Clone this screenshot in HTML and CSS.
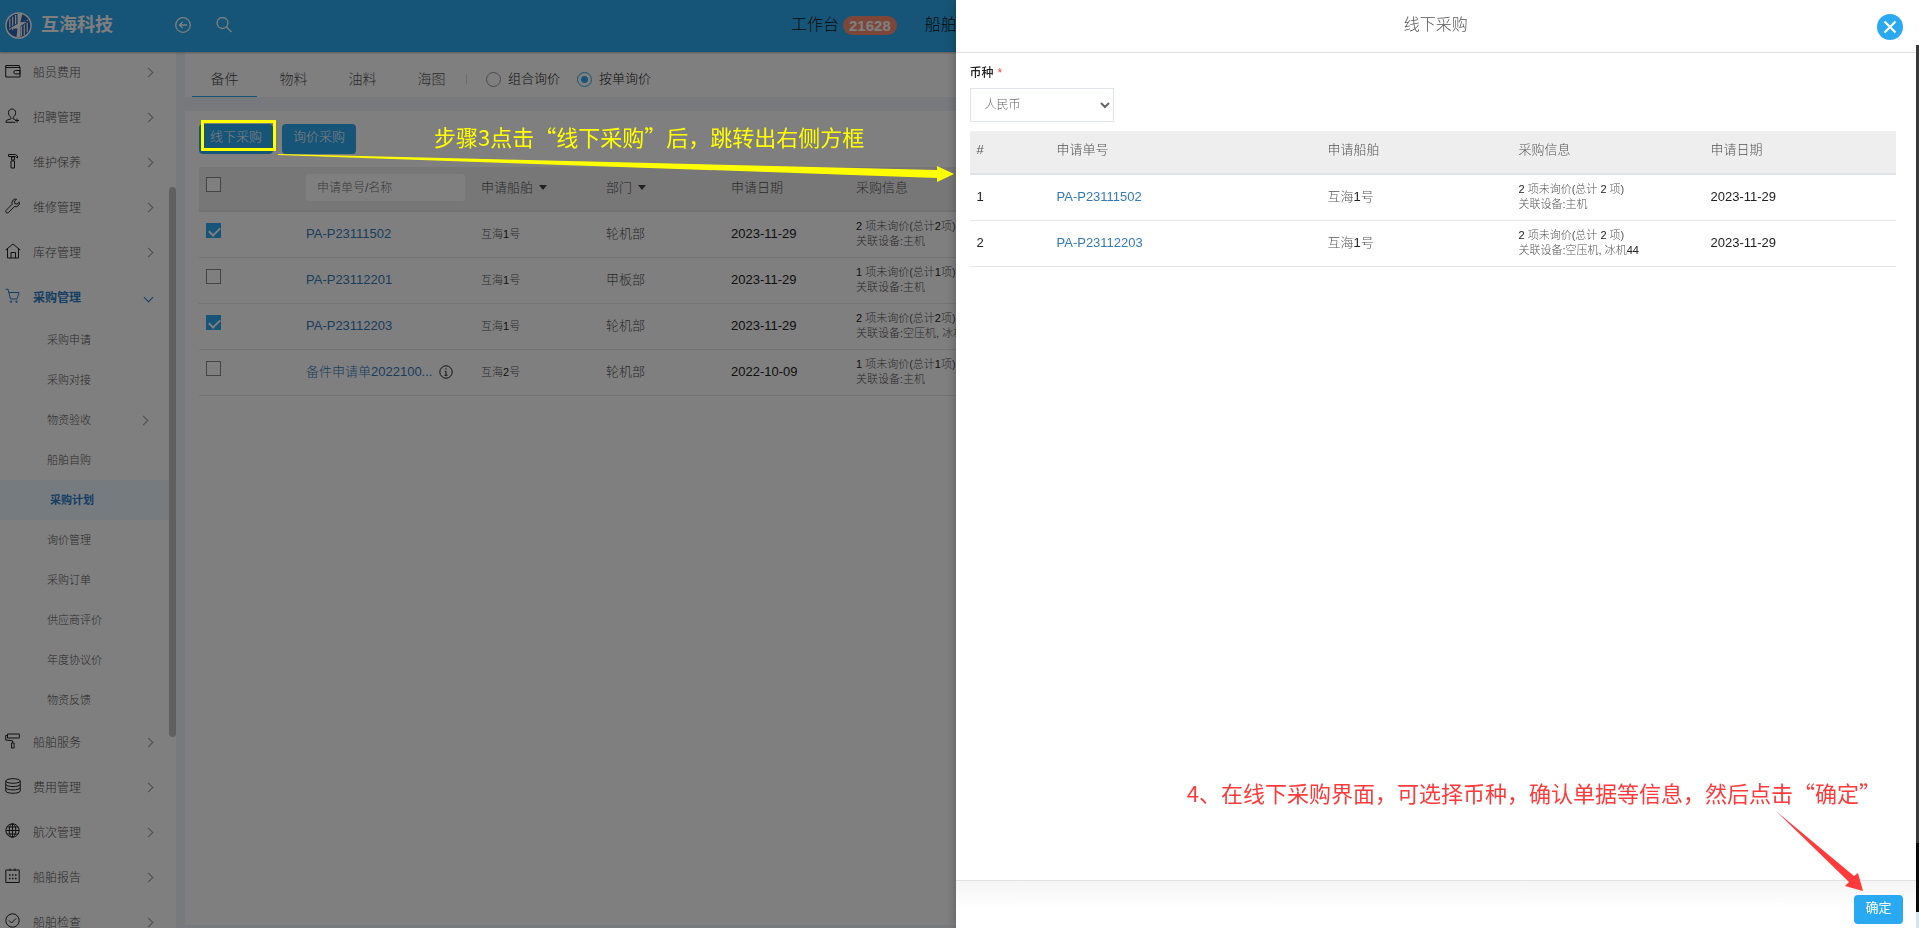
FILE: index.html
```html
<!DOCTYPE html>
<html lang="zh-CN">
<head>
<meta charset="utf-8">
<title>采购计划</title>
<link rel="stylesheet" href="styles.css">
</head>
<body>
<div class="app">
  <header class="topbar">
    <a class="brand" href="#">
      <svg class="brand-logo" viewBox="0 0 28 28" aria-hidden="true">
        <circle cx="14" cy="14" r="13" fill="#2d66b5" stroke="#fff" stroke-width="1.5"/>
        <path d="M5 7v12M8 5v14M11 3v14M17 11v14M20 9v15M23 8v13" stroke="#fff" stroke-width="1.2"/>
        <path d="M13 2h5l-2 8h8l-8 5 0 11h-4l1-9H4l9-5z" fill="#fff"/>
        <path d="M16 10h8l-8 5M4 17l9-5" fill="none" stroke="#2d66b5"/>
      </svg>
      <span class="brand-name">互海科技</span>
    </a>
    <button class="icon-btn" aria-label="返回">
      <svg viewBox="0 0 16 16" class="ico"><circle cx="8" cy="8" r="7.3"/><path d="M12 8H4.500M7.500 5L4.500 8l3 3"/></svg>
    </button>
    <button class="icon-btn" aria-label="搜索">
      <svg viewBox="0 0 16 16" class="ico"><circle cx="6.500" cy="6" r="5.500"/><path d="M10.500 10l5 5"/></svg>
    </button>
    <nav class="topnav">
      <a href="#">工作台<span class="badge">21628</span></a>
      <a href="#">船舶管理</a>
    </nav>
  </header>

  <div class="layout">
    <aside class="sidebar">
      <ul class="menu">
        <li><a class="item" href="#"><svg class="mi" viewBox="0 0 16 16"><path d="M15 4.500V14H.700V2.500h13.600v2"/><path d="M.700 4.500H15.300M15 7.500H10.500a1.700 1.700 0 000 3.400H15z"/></svg><span>船员费用</span><i class="chev"></i></a></li>
        <li><a class="item" href="#"><svg class="mi" viewBox="0 0 16 16"><path d="M6 9.500C4.300 8.300 3.500 6.500 3.500 4.500 3.500 2.300 5 1 7 1s3.600 1.300 3.600 3.500c0 2-.8 3.800-2.600 5v1.300l2.500.8M6 9.500v1.300l-4.500 1.500-.7 2h9.500M12 10.500v4M10 12.500h4"/></svg><span>招聘管理</span><i class="chev"></i></a></li>
        <li><a class="item" href="#"><svg class="mi" viewBox="0 0 16 16"><path d="M3.500 1.500h7l2 1.500v2l-2-1.500H3.500zM6.500 4h3v3h-3zM6 8h3.500v7H6z"/></svg><span>维护保养</span><i class="chev"></i></a></li>
        <li><a class="item" href="#"><svg class="mi" viewBox="0 0 16 16"><path d="M11.500 1.200a3.700 3.700 0 00-4.300 5L.9 12.600c-.8 1.600 1 3 2.300 2.200l6.200-6.300a3.700 3.700 0 004.900-4.400L12 6.200 9.800 5.500 9.500 3.300z"/></svg><span>维修管理</span><i class="chev"></i></a></li>
        <li><a class="item" href="#"><svg class="mi" viewBox="0 0 16 16"><path d="M.7 7L8 1l7.300 6M2.500 6v9h11V6M6 15V9.500h4.500V15"/></svg><span>库存管理</span><i class="chev"></i></a></li>
        <li><a class="item open" href="#"><svg class="mi" viewBox="0 0 16 16"><path d="M.5 1.200H3L5.500 11H12L14 4.500H3.800"/><circle cx="6" cy="13.700" r=".8"/><circle cx="11.500" cy="13.700" r=".8"/></svg><span>采购管理</span><i class="chev down"></i></a>
          <ul class="submenu">
            <li><a href="#">采购申请</a></li>
            <li><a href="#">采购对接</a></li>
            <li><a href="#">物资验收<i class="chev"></i></a></li>
            <li><a href="#">船舶自购</a></li>
            <li><a href="#" class="active">采购计划</a></li>
            <li><a href="#">询价管理</a></li>
            <li><a href="#">采购订单</a></li>
            <li><a href="#">供应商评价</a></li>
            <li><a href="#">年度协议价</a></li>
            <li><a href="#">物资反馈</a></li>
          </ul>
        </li>
        <li><a class="item" href="#"><svg class="mi" viewBox="0 0 16 16"><path d="M2.500 1h11.800v4H2.500zM2.500 2.500H.7V7l7 .8V10M6.500 10h2.600v5H6.500z"/></svg><span>船舶服务</span><i class="chev"></i></a></li>
        <li><a class="item" href="#"><svg class="mi" viewBox="0 0 16 16"><ellipse cx="8" cy="3" rx="7.200" ry="2.300"/><path d="M.8 3v10c0 3 14.400 3 14.400 0V3M.8 6.300c0 3 14.400 3 14.400 0M.8 9.600c0 3 14.400 3 14.400 0"/></svg><span>费用管理</span><i class="chev"></i></a></li>
        <li><a class="item" href="#"><svg class="mi" viewBox="0 0 16 16"><circle cx="7.500" cy="7.500" r="6.700"/><ellipse cx="7.500" cy="7.500" rx="3.300" ry="6.700"/><path d="M7.500 1v13M1 7.500h13M2 4h11M2 11h11"/></svg><span>航次管理</span><i class="chev"></i></a></li>
        <li><a class="item" href="#"><svg class="mi" viewBox="0 0 16 16"><path d="M.8 2h13.400v12.500H.8zM5 .5V3M10 .5V3"/><path d="M4 7h1.500M7 7h1.500M10 7h1.500M4 10.500h1.500M7 10.500h1.500M10 10.500h1.500" stroke-width="1.500"/></svg><span>船舶报告</span><i class="chev"></i></a></li>
        <li><a class="item" href="#"><svg class="mi" viewBox="0 0 16 16"><circle cx="7.500" cy="7.500" r="6.700"/><path d="M4 7.500l2.500 2.500L11 5.500"/></svg><span>船舶检查</span><i class="chev"></i></a></li>
      </ul>
      <div class="scroll-thumb"></div>
    </aside>

    <main class="content">
      <div class="tabs">
        <a class="tab on" href="#">备件</a>
        <a class="tab" href="#">物料</a>
        <a class="tab" href="#">油料</a>
        <a class="tab" href="#">海图</a>
        <span class="sep"></span>
        <label class="radio"><input type="radio" name="mode">组合询价</label>
        <label class="radio"><input type="radio" name="mode" checked>按单询价</label>
      </div>
      <section class="panel">
        <div class="actions">
          <button class="btn">线下采购</button>
          <button class="btn">询价采购</button>
          <div class="mark-box"></div>
        </div>
        <table class="grid plan">
          <colgroup><col class="w-check"><col class="w-no"><col class="w-mid"><col class="w-mid"><col class="w-mid"><col></colgroup>
          <thead>
            <tr><th><input type="checkbox" aria-label="全选"></th><th class="find"><input type="text" placeholder="申请单号/名称" aria-label="申请单号/名称"></th><th>申请船舶<i class="caret"></i></th><th>部门<i class="caret"></i></th><th>申请日期</th><th>采购信息</th></tr>
          </thead>
          <tbody>
            <tr><td><input type="checkbox" aria-label="PA-P23111502" checked></td><td><a href="#">PA-P23111502</a></td><td class="sm">互海<b>1</b>号</td><td>轮机部</td><td class="num">2023-11-29</td><td class="info"><b>2</b> 项未询价(总计<b>2</b>项)<br>关联设备:主机</td></tr>
            <tr><td><input type="checkbox" aria-label="PA-P23112201"></td><td><a href="#">PA-P23112201</a></td><td class="sm">互海<b>1</b>号</td><td>甲板部</td><td class="num">2023-11-29</td><td class="info"><b>1</b> 项未询价(总计<b>1</b>项)<br>关联设备:主机</td></tr>
            <tr><td><input type="checkbox" aria-label="PA-P23112203" checked></td><td><a href="#">PA-P23112203</a></td><td class="sm">互海<b>1</b>号</td><td>轮机部</td><td class="num">2023-11-29</td><td class="info"><b>2</b> 项未询价(总计<b>2</b>项)<br>关联设备:空压机, 冰机<b>44</b></td></tr>
            <tr><td><input type="checkbox" aria-label="备件申请单"></td><td><div class="named"><a href="#">备件申请单2022100...</a><svg viewBox="0 0 14 14" class="tip"><circle cx="7" cy="7" r="6.200"/><path d="M7 3.200v1.300M5.800 6.300H7v4M5.500 10.300h3"/></svg></div></td><td class="sm">互海<b>2</b>号</td><td>轮机部</td><td class="num">2022-10-09</td><td class="info"><b>1</b> 项未询价(总计<b>1</b>项)<br>关联设备:主机</td></tr>
          </tbody>
        </table>
      </section>
    </main>
  </div>
</div>

<div class="mask"></div>

<aside class="drawer">
  <header class="drawer-head">
    <h2>线下采购</h2>
    <button class="close" aria-label="关闭"><svg viewBox="0 0 26 26"><path d="M7.500 7.500l11 11M18.500 7.500l-11 11" stroke="#fff" stroke-width="2.200"/></svg></button>
  </header>
  <div class="drawer-body">
    <label class="field" for="currency">币种<span class="req">*</span></label>
    <select id="currency"><option>人民币</option></select>
    <table class="grid order">
      <colgroup><col class="c1"><col class="c2"><col class="c3"><col class="c4"><col></colgroup>
      <thead><tr><th>#</th><th>申请单号</th><th>申请船舶</th><th>采购信息</th><th>申请日期</th></tr></thead>
      <tbody>
        <tr><td class="num">1</td><td><a href="#">PA-P23111502</a></td><td>互海<b>1</b>号</td><td class="info"><b>2</b> 项未询价(总计 <b>2</b> 项)<br>关联设备:主机</td><td class="num">2023-11-29</td></tr>
        <tr><td class="num">2</td><td><a href="#">PA-P23112203</a></td><td>互海<b>1</b>号</td><td class="info"><b>2</b> 项未询价(总计 <b>2</b> 项)<br>关联设备:空压机, 冰机<b>44</b></td><td class="num">2023-11-29</td></tr>
      </tbody>
    </table>
  </div>
  <footer class="drawer-foot"><button class="btn ok">确定</button></footer>
  <p class="note red">4、在线下采购界面，可选择币种，确认单据等信息，然后点击“确定”</p>
  <svg class="arrow-red" viewBox="0 0 90 82" aria-hidden="true"><path d="M1 1L79 66 83 63 88 81 70 76 74 72z" fill="#ff3a3a"/></svg>
</aside>
<div class="edge"></div>

<p class="note yellow">步骤3点击“线下采购”后，跳转出右侧方框</p>
<svg class="arrow-yellow" viewBox="0 0 678 30" aria-hidden="true"><path d="M0 1L659 17V13L676 21 659 29V25L0 2z" fill="#ff0"/></svg>
</body>
</html>
```
FILE: styles.css
```css
* { box-sizing: border-box; }
body {
  margin: 0;
  height: 100vh;
  overflow: hidden;
  background: #eef3f9;
  color: #555;
  font: 300 13px/18px "Liberation Sans", "Noto Sans CJK SC", sans-serif;
}
a { color: inherit; text-decoration: none; }
ul { list-style: none; margin: 0; padding: 0; }
button { border: 0; background: none; padding: 0; font: inherit; cursor: pointer; }
b { font-weight: 400; color: #222; }

.app { height: 100vh; display: flex; flex-direction: column; }

.topbar {
  position: relative;
  z-index: 2;
  flex: none;
  height: 52px;
  display: flex;
  align-items: center;
  padding: 0 5px 2px;
  background: #2caaf0;
  box-shadow: 0 1px 2px rgba(0, 0, 0, .3);
}
.brand { display: flex; align-items: center; gap: 9px; color: #fff; }
.brand-logo { width: 27px; height: 27px; }
.brand-name { font-size: 18px; font-weight: 700; width: 134px; }
.icon-btn { width: 16px; height: 16px; margin-right: 25px; }
.ico { display: block; width: 16px; height: 16px; fill: none; stroke: #fff; stroke-width: 1.3; }
.topnav { display: flex; margin-left: 534px; gap: 28px; font-size: 16px; color: #111; white-space: nowrap; }
.topnav a { display: flex; align-items: center; gap: 4px; }
.badge {
  padding: 0 6px;
  border-radius: 10px;
  background: #f98e72;
  color: #fff;
  font-size: 15px;
  font-weight: 700;
  line-height: 19px;
}

.layout { flex: 1; min-height: 0; display: flex; gap: 9px; }
.sidebar { position: relative; flex: none; width: 176px; background: #fff; overflow: hidden; }
.menu { margin-top: -2px; }
.item { height: 45px; display: flex; align-items: center; padding: 0 24px 0 5px; gap: 12px; font-size: 12px; }
.mi { width: 16px; height: 16px; fill: none; stroke: #222; stroke-width: 1; margin-top: -3px; }
.item span { flex: 1; }
.chev { width: 7px; height: 7px; border: solid #999; border-width: 1px 1px 0 0; transform: rotate(45deg); }
.chev.down { transform: rotate(135deg); border-color: #2a7cc7; }
.item.open { color: #2a7cc7; font-weight: 700; }
.item.open .mi { stroke: #2a7cc7; }
.submenu a { height: 40px; display: flex; align-items: center; justify-content: space-between; padding: 0 29px 0 47px; font-size: 11px; }
.submenu .active { background: #ebf6ff; color: #2a7cc7; font-weight: 700; padding-left: 50px; margin-right: 7px; }
.scroll-thumb { position: absolute; right: 0; top: 135px; width: 7px; height: 550px; border-radius: 4px; background: #c1c1c1; }

.content { flex: 1; min-width: 0; display: flex; flex-direction: column; gap: 14px; padding-bottom: 3px; }
.tabs { flex: none; height: 45px; display: flex; align-items: stretch; gap: 4px; padding-left: 7px; background: #fff; }
.tab { width: 65px; line-height: 54px; text-align: center; font-size: 14px; }
.tab.on { border-bottom: 1px solid #2caaf0; color: #444; }
.sep { width: 1px; height: 10px; margin: 22px 15px 0 -2px; background: #ddd; }
.radio { display: flex; align-items: center; gap: 7px; padding-top: 9px; margin-right: 13px; color: #222; }
.radio input { appearance: none; width: 15px; height: 15px; margin: 0; border: 1px solid #999; border-radius: 50%; background: #fff; }
.radio input:checked { border-color: #2caaf0; background: radial-gradient(#2caaf0 3px, #fff 4px); }

.panel { flex: 1; padding: 13px 14px; background: #fff; }
.actions { position: relative; display: flex; gap: 9px; margin-bottom: 13px; }
.btn { height: 30px; width: 74px; border-radius: 4px; background: #2caaf0; color: #fff; padding-bottom: 4px; }
.mark-box { position: absolute; left: 2px; top: -4px; width: 75px; height: 31px; border: 3px solid #ff0; z-index: 20; }

.grid { width: 100%; table-layout: fixed; border-collapse: separate; border-spacing: 0; text-align: left; }
.grid th { height: 45px; font-weight: 300; background: #eee; border-bottom: 2px solid #e0e4e8; }
.grid td { height: 46px; border-bottom: 1px solid #e4e6e8; }
.grid th, .grid td { padding: 0 7px 2px; }
.grid a { color: #337ab7; }
.grid .num { color: #222; font-weight: 400; }
.grid .info { font-size: 11px; line-height: 15px; white-space: nowrap; }
.plan .sm { font-size: 11px; }
.w-check { width: 100px; }
.w-no { width: 175px; }
.w-mid { width: 125px; }
.grid input[type=checkbox] {
  appearance: none;
  display: block;
  width: 15px;
  height: 15px;
  margin: 0 0 6px;
  border: 1px solid #888;
  background: #fff;
}
.grid input[type=checkbox]:checked { border: 0; background: #2caaf0; position: relative; }
.grid input[type=checkbox]:checked::after {
  content: "";
  position: absolute;
  left: 5px;
  top: 2px;
  width: 5px;
  height: 9px;
  border: solid #fff;
  border-width: 0 2px 2px 0;
  transform: rotate(45deg);
}
.find input { display: block; width: 159px; height: 27px; border: 0; border-radius: 3px; padding: 0 11px; font: 300 12px "Liberation Sans", "Noto Sans CJK SC", sans-serif; }
.find input::placeholder { color: #777; }
.caret { display: inline-block; margin-left: 6px; border: 4px solid transparent; border-top: 5px solid #444; border-bottom: 0; vertical-align: 2px; }
.named { display: flex; align-items: center; gap: 7px; white-space: nowrap; }
.tip { flex: none; width: 14px; height: 14px; fill: none; stroke: #222; }

.mask { position: fixed; inset: 0; z-index: 5; background: rgba(0, 0, 0, .5); }

.drawer {
  position: fixed;
  top: 0;
  right: 3px;
  bottom: 0;
  z-index: 10;
  width: calc(50% + 1px);
  display: flex;
  flex-direction: column;
  background: #fff;
  box-shadow: 0 0 10px rgba(0, 0, 0, .3);
}
.drawer-head { flex: none; height: 53px; display: flex; align-items: center; justify-content: center; border-bottom: 1px solid #e2e2e2; }
.drawer-head h2 { margin: 0 0 2px; font-size: 16px; font-weight: 300; line-height: 24px; }
.close { position: absolute; right: 13px; top: 14px; width: 26px; height: 26px; border-radius: 50%; background: #2aa9f3; }
.close svg { display: block; }
.drawer-body { flex: 1; padding: 11px 20px 0 14px; }
.field { display: block; color: #222; font-size: 12px; font-weight: 500; margin-bottom: 6px; }
.req { color: #e7503a; margin-left: 4px; }
#currency { display: block; width: 144px; height: 34px; margin-bottom: 9px; padding-left: 10px; border: 1px solid #dfe4e8; border-radius: 0; background: #fff; color: #666; font: 300 12px "Liberation Sans", "Noto Sans CJK SC", sans-serif; }
.order th { height: 44px; padding-bottom: 4px; }
.c1 { width: 80px; }
.c2 { width: 271px; }
.c3 { width: 191px; }
.c4 { width: 192px; }
.drawer-foot {
  flex: none;
  height: 48px;
  display: flex;
  justify-content: flex-end;
  align-items: flex-end;
  padding: 0 13px 4px;
  border-top: 1px solid #e2e2e2;
  background: linear-gradient(#f5f5f5, #fff 60%);
}
.ok { width: 49px; height: 29px; background: #2aa9f3; font-weight: 400; }
.edge {
  position: fixed;
  top: 0;
  right: 0;
  bottom: 0;
  width: 3px;
  z-index: 10;
  background: linear-gradient(#fff 45px, #3a3a3a 45px, #3a3a3a 843px, #0a0a0a 843px, #0a0a0a 912px, #cfe6ee 912px);
}

.note { position: absolute; z-index: 20; margin: 0; font: 400 22px/30px "Noto Sans CJK SC", sans-serif; white-space: nowrap; }
.yellow { left: 434px; top: 121px; color: #ff0; }
.red { right: 35px; bottom: 121px; color: #ff3a3a; }
.arrow-yellow { position: absolute; z-index: 20; left: 278px; top: 153px; width: 678px; height: 30px; }
.arrow-red { position: absolute; right: 51px; bottom: 36px; width: 90px; height: 82px; }
```
